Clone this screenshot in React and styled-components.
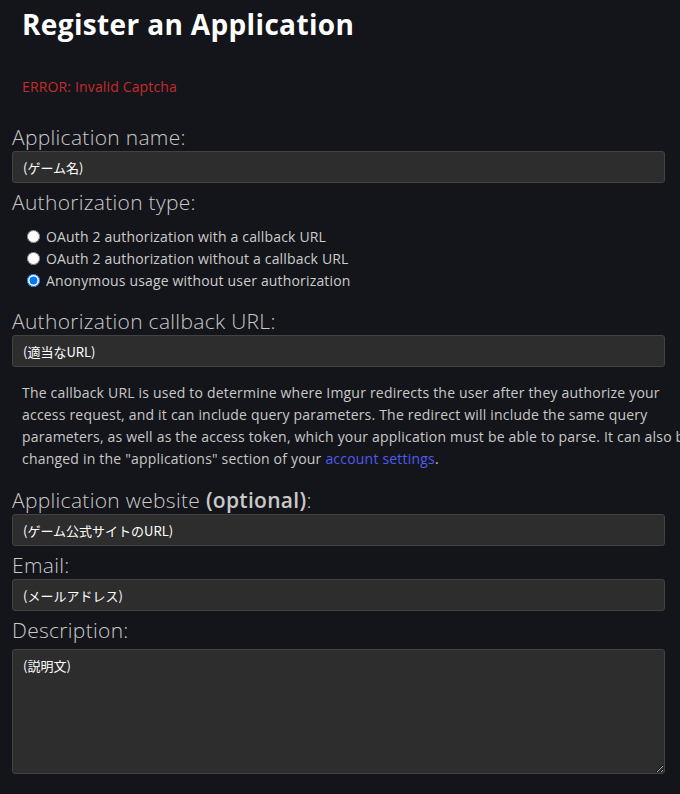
import React from "react";
import styled, { createGlobalStyle } from "styled-components";

const GlobalStyle = createGlobalStyle`
  html, body {
    margin: 0;
    padding: 0;
    background: #14151a;
    overflow-x: hidden;
  }
  body {
    font-family: "Open Sans", "Noto Sans CJK JP", sans-serif;
  }
`;

const Page = styled.div`
  padding: 0 15px 20px 12px;
  width: 653px;
`;

const Title = styled.h1`
  margin: 0;
  padding: 4px 10px 0;
  font-size: 28px;
  line-height: 40px;
  font-weight: 700;
  letter-spacing: 0.35px;
  color: #ffffff;
`;

const Error = styled.p`
  margin: 33px 0 0;
  padding: 0 10px;
  font-size: 14px;
  line-height: 20px;
  letter-spacing: 0.15px;
  color: #c62a2a;
`;

const Label = styled.label`
  display: block;
  margin-top: ${(p) => p.$top || 0}px;
  font-size: 21px;
  line-height: 28px;
  font-weight: 300;
  letter-spacing: 0.3px;
  color: #c9c9c9;

  b {
    font-weight: 600;
  }
`;

const Input = styled.input`
  box-sizing: border-box;
  display: block;
  width: 100%;
  height: 32px;
  margin: 0;
  padding: 0 10px;
  background: #2d2d2d;
  border: 1px solid #424242;
  border-radius: 3px;
  color: #ffffff;
  font-family: "Noto Sans CJK JP", "Open Sans", sans-serif;
  font-size: 13px;
  outline: none;
`;

const TextArea = styled.textarea`
  box-sizing: border-box;
  display: block;
  width: 100%;
  height: 125px;
  margin-top: 5px;
  padding: 6px 10px;
  background: #2d2d2d;
  border: 1px solid #424242;
  border-radius: 3px;
  color: #ffffff;
  font-family: "Noto Sans CJK JP", "Open Sans", sans-serif;
  font-size: 13px;
  outline: none;
  resize: vertical;
`;

const RadioList = styled.div`
  display: flex;
  flex-direction: column;
  padding: 9px 0 0 14px;
`;

const RadioRow = styled.label`
  display: flex;
  align-items: center;
  height: 22px;
  font-size: 14px;
  letter-spacing: 0.17px;
  color: #cccccc;

  input {
    margin: 0 6px 0 1px;
    width: 13px;
    height: 13px;
  }
`;

const Help = styled.p`
  margin: 15px 0 0 10px;
  width: 672px;
  font-size: 14px;
  line-height: 22px;
  letter-spacing: 0.2px;
  color: #c8c8c8;

  a {
    color: #4f5bf0;
    text-decoration: none;
  }
`;

const radios = [
  "OAuth 2 authorization with a callback URL",
  "OAuth 2 authorization without a callback URL",
  "Anonymous usage without user authorization",
];

export default function App() {
  return (
    <>
      <GlobalStyle />
      <Page>
        <Title>Register an Application</Title>
        <Error>ERROR: Invalid Captcha</Error>
        <Label $top={26}>Application name:</Label>
        <Input defaultValue="(ゲーム名)" />
        <Label $top={5}>Authorization type:</Label>
        <RadioList>
          {radios.map((r, i) => (
            <RadioRow key={r}>
              <input type="radio" name="type" defaultChecked={i === 2} />
              {r}
            </RadioRow>
          ))}
        </RadioList>
        <Label $top={16}>Authorization callback URL:</Label>
        <Input defaultValue="(適当なURL)" />
        <Help>
          The callback URL is used to determine where Imgur redirects the user
          after they authorize your access request, and it can include query
          parameters. The redirect will include the same query parameters, as
          well as the access token, which your application must be able to
          parse. It can also be changed in the "applications" section of your{" "}
          <a href="#">account settings</a>.
        </Help>
        <Label $top={16}>
          Application website <b>(optional)</b>:
        </Label>
        <Input defaultValue="(ゲーム公式サイトのURL)" />
        <Label $top={5}>Email:</Label>
        <Input defaultValue="(メールアドレス)" />
        <Label $top={5}>Description:</Label>
        <TextArea defaultValue="(説明文)" />
      </Page>
    </>
  );
}
